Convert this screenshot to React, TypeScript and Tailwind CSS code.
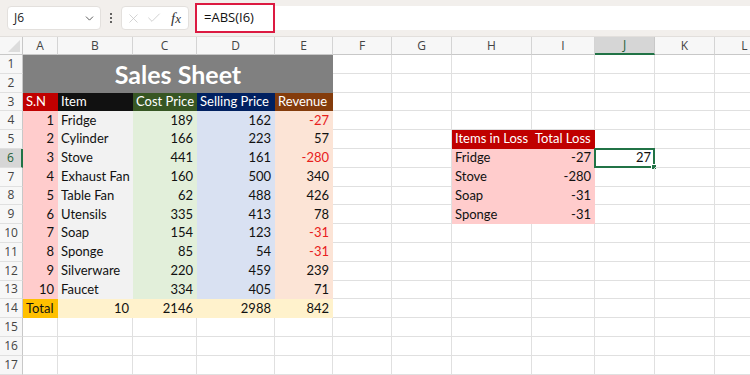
import React from 'react';
import { ChevronDown, X, Check } from 'lucide-react';
import clsx from 'clsx';

type Cell = { text?: string; bg?: string; color?: string; right?: boolean };

const COLS = ['A', 'B', 'C', 'D', 'E', 'F', 'G', 'H', 'I', 'J', 'K', 'L'];

const items: [string, number, number][] = [
  ['Fridge', 189, 162],
  ['Cylinder', 166, 223],
  ['Stove', 441, 161],
  ['Exhaust Fan', 160, 500],
  ['Table Fan', 62, 488],
  ['Utensils', 335, 413],
  ['Soap', 154, 123],
  ['Sponge', 85, 54],
  ['Silverware', 220, 459],
  ['Faucet', 334, 405],
];

const losses: [string, number][] = [
  ['Fridge', -27],
  ['Stove', -280],
  ['Soap', -31],
  ['Sponge', -31],
];

// fill classes for the sales table columns A..E
const fills = ['bg-[#ffcccc]', 'bg-[#f2f2f2]', 'bg-[#e2efda]', 'bg-[#d9e1f2]', 'bg-[#fce4d6]'];
const heads = ['bg-[#c00000]', 'bg-[#111111]', 'bg-[#375623]', 'bg-[#002060]', 'bg-[#843c0c]'];
const headText = ['S.N', 'Item', 'Cost Price', 'Selling Price', 'Revenue'];

function getCell(r: number, c: number): Cell {
  if (r === 3 && c <= 4) return { text: headText[c], bg: heads[c], color: 'text-white' };
  if (r >= 4 && r <= 13 && c <= 4) {
    const [name, cost, sell] = items[r - 4];
    const rev = sell - cost;
    const vals = [String(r - 3), name, String(cost), String(sell), String(rev)];
    return {
      text: vals[c],
      bg: fills[c],
      right: c !== 1,
      color: c === 4 && rev < 0 ? 'text-[#e8201c]' : undefined,
    };
  }
  if (r === 14 && c <= 4) {
    if (c === 0) return { text: 'Total', bg: 'bg-[#ffc000]' };
    const vals = ['', '10', '2146', '2988', '842'];
    return { text: vals[c], bg: 'bg-[#fff2cc]', right: true };
  }
  if (r === 5 && c === 7) return { text: 'Items in Loss', bg: 'bg-[#c00000]', color: 'text-white' };
  if (r === 5 && c === 8) return { text: 'Total Loss', bg: 'bg-[#c00000]', color: 'text-white' };
  if (r >= 6 && r <= 9 && c === 7) return { text: losses[r - 6][0], bg: 'bg-[#ffcccc]' };
  if (r >= 6 && r <= 9 && c === 8) return { text: String(losses[r - 6][1]), bg: 'bg-[#ffcccc]', right: true };
  if (r === 6 && c === 9) return { text: '27', right: true };
  return {};
}

const Toolbar: React.FC = () => (
  <div className="h-[37px] bg-[#f2efec] flex items-center border-b border-[#e2dfdc] font-['Open_Sans',sans-serif]">
    <div className="ml-[7px] w-[94px] h-[24px] bg-white rounded-[4px] border border-[#e3e0dd] flex items-center justify-between pl-[6px] pr-[4px]">
      <span className="text-[12px] text-[#222]">J6</span>
      <ChevronDown size={13} strokeWidth={1.6} className="text-[#444]" />
    </div>
    <div className="w-[20px] flex flex-col items-center gap-[2px]">
      <span className="w-[2px] h-[2px] bg-[#333] rounded-full" />
      <span className="w-[2px] h-[2px] bg-[#333] rounded-full" />
      <span className="w-[2px] h-[2px] bg-[#333] rounded-full" />
    </div>
    <div className="w-[68px] h-[24px] bg-white rounded-[4px] border border-[#e3e0dd] flex items-center pl-[4px] gap-[3px]">
      <X size={15} strokeWidth={1.2} className="text-[#c4c4c4]" />
      <Check size={16} strokeWidth={1.2} className="text-[#c4c4c4] ml-[2px]" />
      <span className="ml-[6px] text-[15px] italic font-['Liberation_Serif',serif] text-[#333] leading-none">
        f<span className="text-[13px]">x</span>
      </span>
    </div>
    <div className="ml-[6px] flex-1 h-[24px] bg-white flex items-center">
      <div className="w-[80px] h-[30px] shrink-0 border-[2.5px] border-[#dc1a41] bg-white flex items-center pl-[7px] text-[13px] text-[#111]">
        =ABS(I6)
      </div>
    </div>
  </div>
);

export default function App() {
  const rows = Array.from({ length: 17 }, (_, i) => i + 1);
  return (
    <div className="w-[750px] h-[375px] overflow-hidden bg-white">
      <Toolbar />
      <div className="w-[775px] grid grid-cols-[23px_35px_75px_64px_78px_58px_59px_60px_80px_63px_60px_60px_60px] grid-rows-[18px_repeat(17,18.8px)]">
        {/* corner */}
        <div className="bg-[#f7f7f7] border-r border-b border-[#c8c8c8] relative">
          <div className="absolute right-[2px] bottom-[2px] w-0 h-0 border-l-[12px] border-l-transparent border-b-[12px] border-b-[#dcdcdc]" />
        </div>
        {COLS.map((l) => (
          <div
            key={l}
            className={clsx(
              "flex items-center justify-center text-[12px] font-['Open_Sans',sans-serif] border-r",
              l === 'J'
                ? 'bg-[#d6d6d6] text-[#1e5e38] border-b-2 border-b-[#217346] border-r-[#c8c8c8]'
                : 'bg-[#f7f7f7] text-[#444] border-b border-[#d4d4d4] border-b-[#c8c8c8]'
            )}
          >
            {l}
          </div>
        ))}
        {rows.map((r) => (
          <React.Fragment key={r}>
            <div
              className={clsx(
                "flex items-center justify-center text-[12px] font-['Open_Sans',sans-serif] border-b border-[#e0e0e0]",
                r === 6
                  ? 'bg-[#d6d6d6] text-[#1e5e38] border-r-2 border-r-[#217346]'
                  : 'bg-[#f7f7f7] text-[#444] border-r border-r-[#c8c8c8]'
              )}
            >
              {r}
            </div>
            {r === 1 && (
              <div className="col-span-5 row-span-2 bg-[#808080] flex items-center justify-center pt-[2px] text-white font-bold text-[25px] font-['Lato',sans-serif]">
                Sales Sheet
              </div>
            )}
            {COLS.map((l, c) => {
              if ((r === 1 || r === 2) && c <= 4) return null;
              const cell = getCell(r, c);
              const selected = r === 6 && c === 9;
              return (
                <div
                  key={l}
                  className={clsx(
                    "relative flex items-center px-[3px] text-[13px] font-['Lato',sans-serif] whitespace-nowrap overflow-visible border-r border-b",
                    cell.bg ? [cell.bg, 'border-transparent'] : 'border-[#e0e0e0]',
                    cell.right ? 'justify-end' : 'justify-start',
                    cell.color ?? 'text-[#111]'
                  )}
                >
                  {cell.text}
                  {selected && (
                    <div className="absolute -left-[1px] -top-[1px] -right-[1px] -bottom-[1px] border-2 border-[#217346]">
                      <div className="absolute -right-[4px] -bottom-[4px] w-[6px] h-[6px] bg-[#217346] border border-white" />
                    </div>
                  )}
                </div>
              );
            })}
          </React.Fragment>
        ))}
      </div>
    </div>
  );
}
